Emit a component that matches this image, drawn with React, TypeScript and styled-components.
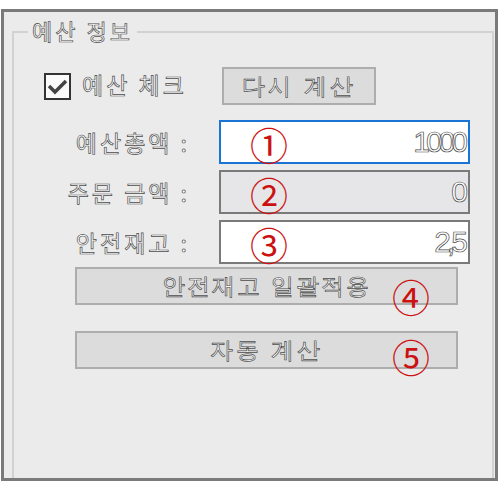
import React, { useState } from 'react';
import styled, { createGlobalStyle } from 'styled-components';

const GlobalStyle = createGlobalStyle`
  html, body {
    margin: 0;
    padding: 0;
    background: #ffffff;
  }
  body {
    font-family: "Noto Sans CJK KR", "Noto Sans", sans-serif;
  }
`;

// 바깥 창 테두리
const Frame = styled.div`
  box-sizing: border-box;
  margin: 9px 0 0 1px;
  width: 497px;
  height: 472px;
  border: 3px solid #7a7a7a;
  background: #ebebec;
  display: flex;
`;

const GroupBox = styled.fieldset`
  box-sizing: border-box;
  flex: 1;
  margin: 7px 1px 0 8px;
  padding: 0;
  border: 2px solid #d2d2d2;
  border-bottom: none;
  min-width: 0;
`;

const Legend = styled.legend`
  margin-left: 14px;
  padding: 0 4px;
`;

// 양각 느낌의 비활성 글씨
const Emboss = styled.span<{ $size?: number; $spacing?: number }>`
  font-size: ${(p) => p.$size ?? 23}px;
  letter-spacing: ${(p) => p.$spacing ?? 2}px;
  line-height: 1;
  color: #ffffff;
  -webkit-text-stroke: 0.7px #4a4a4a;
  white-space: pre;
`;

const Body = styled.div`
  display: flex;
  flex-direction: column;
  padding-top: 22px;
`;

const CheckRow = styled.div`
  display: flex;
  align-items: center;
  height: 38px;
  padding-left: 30px;
`;

const CheckBox = styled.div`
  box-sizing: border-box;
  flex: none;
  width: 27px;
  height: 27px;
  border: 2px solid #333;
  background: #fafafa;
  display: flex;
  align-items: center;
  justify-content: center;
  cursor: pointer;
  margin-right: 11px;
`;

const CheckLabel = styled.div`
  width: 140px;
`;

const GrayButton = styled.button<{ $width: number }>`
  box-sizing: border-box;
  position: relative;
  width: ${(p) => p.$width}px;
  height: 38px;
  border: 2px solid #adadad;
  background: #dcdcdc;
  display: flex;
  align-items: center;
  justify-content: center;
  padding: 0;
  cursor: pointer;
`;

const FieldGrid = styled.div`
  display: grid;
  grid-template-columns: 176px 251px;
  column-gap: 29px;
  row-gap: 6px;
  margin-top: 15px;
`;

const FieldLabel = styled.div`
  display: flex;
  align-items: center;
  justify-content: flex-end;
`;

const InputBox = styled.div<{ $focused?: boolean; $disabled?: boolean }>`
  box-sizing: border-box;
  position: relative;
  height: 44px;
  border: 2px solid ${(p) => (p.$focused ? '#1a74d6' : '#7a7a7a')};
  background: ${(p) => (p.$disabled ? '#e6e6e8' : '#ffffff')};
  display: flex;
  align-items: center;
  justify-content: flex-end;
  padding-right: 4px;
`;

const NumberText = styled.span`
  font-family: "Liberation Sans", Arial, sans-serif;
  font-size: 30px;
  letter-spacing: -4px;
  line-height: 1;
  color: #ffffff;
  -webkit-text-stroke: 0.7px #4a4a4a;
`;

const Marker = styled.span<{ $left: number; $top: number }>`
  position: absolute;
  left: ${(p) => p.$left}px;
  top: ${(p) => p.$top}px;
  font-family: "Noto Sans CJK KR", sans-serif;
  font-size: 38px;
  line-height: 1;
  color: #cc1111;
  pointer-events: none;
`;

const ActionList = styled.div`
  display: flex;
  flex-direction: column;
  gap: 26px;
  margin-top: 3px;
  padding-left: 61px;
`;

const fields = [
  { label: '예산총액 :', value: '1000', mark: '①', focused: true, disabled: false },
  { label: '주문 금액 :', value: '0', mark: '②', focused: false, disabled: true },
  { label: '안전재고 :', value: '2,5', mark: '③', focused: false, disabled: false },
];

const App: React.FC = () => {
  const [checked, setChecked] = useState(true);

  return (
    <>
      <GlobalStyle />
      <Frame>
        <GroupBox>
          <Legend>
            <Emboss $size={22} $spacing={3}>예산 정보</Emboss>
          </Legend>
          <Body>
            <CheckRow>
              <CheckBox onClick={() => setChecked(!checked)}>
                {checked && (
                  <svg width="21" height="17" viewBox="0 0 21 17">
                    <path d="M2 8 L8 14 L19 3" fill="none" stroke="#444" strokeWidth="3.5" />
                  </svg>
                )}
              </CheckBox>
              <CheckLabel>
                <Emboss $spacing={3}>예산 체크</Emboss>
              </CheckLabel>
              <GrayButton $width={154}>
                <Emboss $spacing={3}>다시 계산</Emboss>
              </GrayButton>
            </CheckRow>

            <FieldGrid>
              {fields.map((f) => (
                <React.Fragment key={f.mark}>
                  <FieldLabel>
                    <Emboss $spacing={3}>{f.label}</Emboss>
                  </FieldLabel>
                  <InputBox $focused={f.focused} $disabled={f.disabled}>
                    <NumberText>{f.value}</NumberText>
                    <Marker $left={29} $top={3}>{f.mark}</Marker>
                  </InputBox>
                </React.Fragment>
              ))}
            </FieldGrid>

            <ActionList>
              <GrayButton $width={383}>
                <Emboss $spacing={2}>안전재고 일괄적용</Emboss>
                <Marker $left={315} $top={8}>④</Marker>
              </GrayButton>
              <GrayButton $width={383}>
                <Emboss $spacing={3}>자동 계산</Emboss>
                <Marker $left={315} $top={4}>⑤</Marker>
              </GrayButton>
            </ActionList>
          </Body>
        </GroupBox>
      </Frame>
    </>
  );
};

export default App;
